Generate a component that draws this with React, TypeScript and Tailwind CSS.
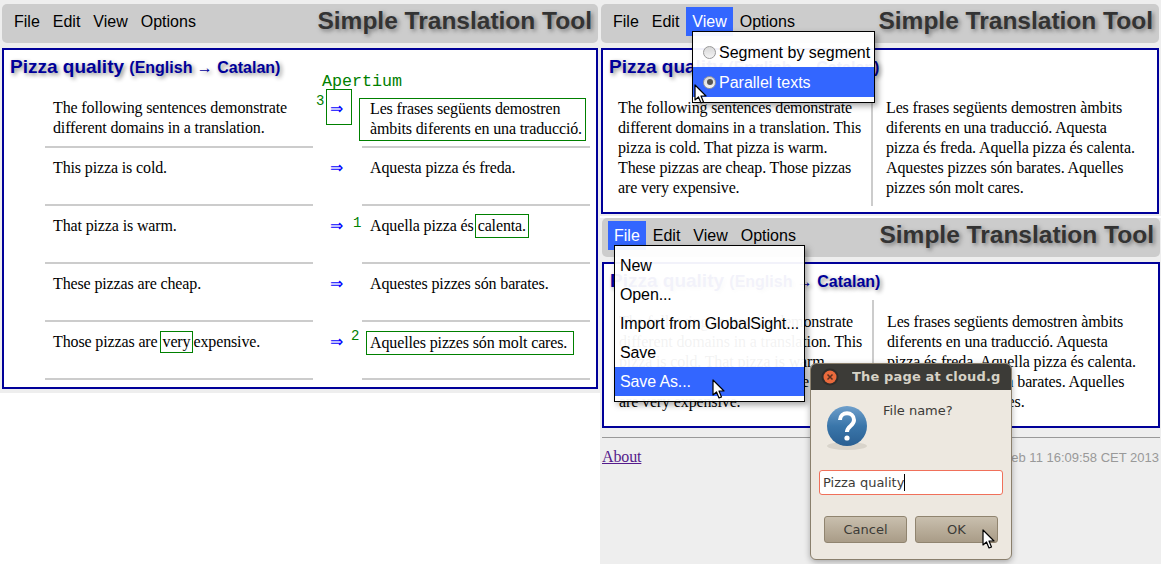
import type { ReactNode } from 'react'

const serif = "font-['Liberation_Serif',serif] text-[16px] leading-[20px] tracking-[-0.13px] text-black"
const sans = "font-['Liberation_Sans',Arial,sans-serif]"
const mono = "font-['Liberation_Mono',monospace] text-[#008000]"
const dejavu = "font-['DejaVu_Sans',sans-serif]"

const menuItems = ['File', 'Edit', 'View', 'Options']

function TopBar({ active }: { active?: string }) {
  return (
    <div className="flex h-[39px] items-start justify-between rounded-[5px] bg-[#cccccc] pl-[6px] pr-[6px] pt-[3px]">
      <nav className={`flex gap-px text-[16px] leading-[29px] text-black ${sans}`}>
        {menuItems.map((m) => (
          <span key={m} className={m === active ? 'bg-[#3366ff] px-[6px] text-white' : 'px-[6px]'}>
            {m}
          </span>
        ))}
      </nav>
      <div className={`text-[24.5px] font-bold leading-[27px] text-[#333333] [text-shadow:2px_2px_4px_#777] ${sans}`}>
        Simple Translation Tool
      </div>
    </div>
  )
}

function DocTitle() {
  return (
    <h1 className={`pl-[6px] pt-[5px] text-[19px] font-bold leading-[24px] text-[#000099] [text-shadow:2px_2px_4px_#888] ${sans}`}>
      Pizza quality <span className="text-[16px]">(English → Catalan)</span>
    </h1>
  )
}

function Marked({ children, className = '' }: { children: ReactNode; className?: string }) {
  return <span className={`inline-block border border-[#008000] ${className}`}>{children}</span>
}

function Arrow() {
  return <span className={`${serif} !text-[#0000ff]`}>⇒</span>
}

function SegmentRow({ left, right, arrow, first = false }: { left: ReactNode; right: ReactNode; arrow?: ReactNode; first?: boolean }) {
  const top = first ? 'pt-[9px]' : 'pt-[10px]'
  return (
    <div className={`flex ${first ? 'h-[59px]' : 'h-[58px]'} ${serif}`}>
      <div className={`ml-[41px] w-[268px] border-b-2 border-[#cccccc] pl-[8px] ${top}`}>{left}</div>
      <div className="relative w-[49px] pl-[17px] pt-[10px]">
        <Arrow />
        {arrow}
      </div>
      <div className={`w-[228px] border-b-2 border-[#cccccc] pl-[8px] ${top}`}>{right}</div>
    </div>
  )
}

function SegmentView() {
  return (
    <section className="relative ml-[2px] mt-[5px] h-[341px] w-[596px] border-2 border-[#000099] bg-white">
      <DocTitle />
      <div className={`absolute left-[318px] top-[22px] text-[16.7px] leading-[20px] ${mono}`}>Apertium</div>
      <div className="pt-[9px]">
        <SegmentRow
          first
          left={<>The following sentences demonstrate<br />different domains in a translation.</>}
          arrow={
            <>
              <span className="absolute left-[13px] top-0 h-[36px] w-[26px] border border-[#008000]" />
              <span className={`absolute left-[3px] top-[2px] text-[14px] leading-[20px] ${mono}`}>3</span>
            </>
          }
          right={
            <Marked className="-ml-[11px] w-[227px] whitespace-nowrap pb-px pl-[10px]">
              Les frases següents demostren<br />àmbits diferents en una traducció.
            </Marked>
          }
        />
        <SegmentRow left="This pizza is cold." right="Aquesta pizza és freda." />
        <SegmentRow
          left="That pizza is warm."
          arrow={<span className={`absolute left-[40px] top-[7px] text-[14px] leading-[20px] ${mono}`}>1</span>}
          right={<>Aquella pizza és<Marked className="-mt-[2px] ml-px px-[2px] py-px align-top">calenta.</Marked></>}
        />
        <SegmentRow left="These pizzas are cheap." right="Aquestes pizzes són barates." />
        <SegmentRow
          left={<>Those pizzas are<Marked className="-mt-px ml-[2px] px-[2px] align-top">very</Marked>expensive.</>}
          arrow={<span className={`absolute left-[38px] top-[4px] text-[14px] leading-[20px] ${mono}`}>2</span>}
          right={<Marked className="-ml-[4px] -mt-[1px] w-[208px] py-px pl-[3px] align-top">Aquelles pizzes són molt cares.</Marked>}
        />
      </div>
    </section>
  )
}

function ParallelView() {
  return (
    <section className="mt-[5px] h-[166px] border-2 border-[#000099] bg-white">
      <DocTitle />
      <div className={`flex pl-[15px] pt-[18px] ${serif}`}>
        <p className="w-[253px] pb-[8px] pr-[3px]">
          The following sentences demonstrate different domains in a translation. This pizza is cold. That pizza is warm. These pizzas are cheap. Those pizzas are very expensive.
        </p>
        <p className="-mt-[12px] w-[270px] border-l-2 border-[#cccccc] pl-[13px] pt-[12px]">
          Les frases següents demostren àmbits diferents en una traducció. Aquesta pizza és freda. Aquella pizza és calenta. Aquestes pizzes són barates. Aquelles pizzes són molt cares.
        </p>
      </div>
    </section>
  )
}

function Cursor({ className }: { className: string }) {
  return (
    <svg className={`absolute z-50 ${className}`} width="14" height="21" viewBox="0 0 14 21">
      <path d="M1 1 L1 16 L4.5 13 L7 19 L9.5 18 L7 12 L12 12 Z" fill="#fff" stroke="#000" strokeWidth="1.2" strokeLinejoin="round" />
    </svg>
  )
}

function Radio({ checked }: { checked?: boolean }) {
  return (
    <span className="mr-[3px] flex h-[13px] w-[13px] items-center justify-center rounded-full border border-[#999] bg-gradient-to-b from-[#d8d8d8] to-[#f4f4f4]">
      {checked && <span className="h-[6px] w-[6px] rounded-full bg-[#555]" />}
    </span>
  )
}

function ViewMenu() {
  return (
    <div className={`absolute left-[92px] top-[31px] z-20 w-[183px] border border-black bg-white/95 py-[5px] text-[16px] leading-[30px] text-black shadow-[3px_3px_6px_rgba(0,0,0,0.35)] ${sans}`}>
      <div className="flex h-[30px] items-center pl-[10px]">
        <Radio />
        <span className="pt-[2px]">Segment by segment</span>
      </div>
      <div className="flex h-[30px] items-center bg-[#3366ff] pl-[10px] text-white">
        <Radio checked />
        <span className="pt-[2px]">Parallel texts</span>
      </div>
    </div>
  )
}

function FileMenu() {
  const items = ['New', 'Open...', 'Import from GlobalSight...', 'Save', 'Save As...']
  return (
    <div className={`absolute left-[14px] top-[27px] z-20 w-[191px] border border-black bg-white/95 py-[5px] text-[16px] leading-[29px] tracking-[-0.12px] text-black shadow-[3px_3px_6px_rgba(0,0,0,0.35)] ${sans}`}>
      {items.map((item) => (
        <div key={item} className={item === 'Save As...' ? 'bg-[#3366ff] pl-[5px] text-white' : 'pl-[5px]'}>
          {item}
        </div>
      ))}
    </div>
  )
}

function CloseIcon() {
  return (
    <svg width="18" height="18" viewBox="0 0 18 18">
      <circle cx="9" cy="9" r="8.5" fill="#2f2d2a" />
      <circle cx="9" cy="9" r="6.5" fill="#ea6a3c" />
      <path d="M6.5 6.5 L11.5 11.5 M11.5 6.5 L6.5 11.5" stroke="#5a3020" strokeWidth="1.5" />
    </svg>
  )
}

function QuestionIcon() {
  return (
    <svg width="46" height="46" viewBox="0 0 46 46">
      <defs>
        <linearGradient id="q" x1="0" y1="0" x2="0" y2="1">
          <stop offset="0" stopColor="#6f9fcb" />
          <stop offset="0.5" stopColor="#3a76aa" />
          <stop offset="1" stopColor="#2a5f92" />
        </linearGradient>
      </defs>
      <ellipse cx="23" cy="41" rx="20" ry="4" fill="#d9d4cb" />
      <circle cx="23" cy="21" r="20" fill="url(#q)" />
      <path d="M16 15 C16 6 30 6 30 15 C30 21 23 21 23 27" fill="none" stroke="#fff" strokeWidth="4" />
      <circle cx="23" cy="33" r="2.6" fill="#fff" />
    </svg>
  )
}

function DialogButton({ label }: { label: string }) {
  return (
    <button className="h-[27px] w-[83px] rounded-[3px] border border-[#90846f] bg-gradient-to-b from-[#c9bfae] to-[#a99c87] text-[#3c3b37]">
      {label}
    </button>
  )
}

function PromptDialog() {
  return (
    <div className={`absolute left-[210px] top-[145px] z-30 h-[197px] w-[202px] overflow-hidden rounded-[6px] border border-[#8a7f6c] bg-[#ede8e0] text-[13px] text-[#3c3b37] shadow-[0_2px_6px_rgba(0,0,0,0.3)] ${dejavu}`}>
      <div className="flex h-[26px] items-center bg-[#3c3b37] pl-[10px]">
        <CloseIcon />
        <span className="ml-[13px] overflow-hidden whitespace-nowrap text-[13px] font-bold tracking-[0.15px] text-[#d6d2c6]">The page at cloud.g</span>
      </div>
      <div className="flex pl-[13px] pt-[15px]">
        <QuestionIcon />
        <span className="ml-[13px] mt-[-4px] leading-[20px]">File name?</span>
      </div>
      <div className="mx-[8px] mt-[19px] flex h-[25px] items-center rounded-[3px] border border-[#f0705a] bg-white pl-[3px]">
        Pizza quality<span className="h-[17px] w-px bg-black" />
      </div>
      <div className="mt-[21px] flex justify-center gap-[8px]">
        <DialogButton label="Cancel" />
        <DialogButton label="OK" />
      </div>
    </div>
  )
}

export default function App() {
  return (
    <div className="flex h-[564px] w-[1161px] overflow-hidden bg-white">
      {/* left shot */}
      <div className="h-[393px] w-[600px] shrink-0 bg-[#eeeeee] pt-[4px]">
        <div className="ml-[2px] w-[596px]">
          <TopBar />
        </div>
        <SegmentView />
      </div>

      {/* right shots */}
      <div className="relative flex-1">
        <div className="relative h-[216px] bg-[#eeeeee] pl-px pr-[2px] pt-[4px]">
          <TopBar active="View" />
          <ParallelView />
        </div>
        <div className="relative mt-[2px] h-[346px] bg-[#eeeeee] pl-[2px] pr-px">
          <TopBar active="File" />
          <ParallelView />
          <hr className="mt-[9px] border-t border-[#999999]" />
          <div className="mt-[9px] flex items-start justify-between pr-[1px]">
            <a className={`${serif} !text-[#551a8b] underline`}>About</a>
            <span className={`text-[13px] leading-[22px] text-[#999999] ${sans}`}>Mon Feb 11 16:09:58 CET 2013</span>
          </div>
          <FileMenu />
          <PromptDialog />
        </div>
        <ViewMenu />
        <Cursor className="left-[94px] top-[84px]" />
        <Cursor className="left-[112px] top-[379px]" />
        <Cursor className="left-[382px] top-[529px]" />
      </div>
    </div>
  )
}
